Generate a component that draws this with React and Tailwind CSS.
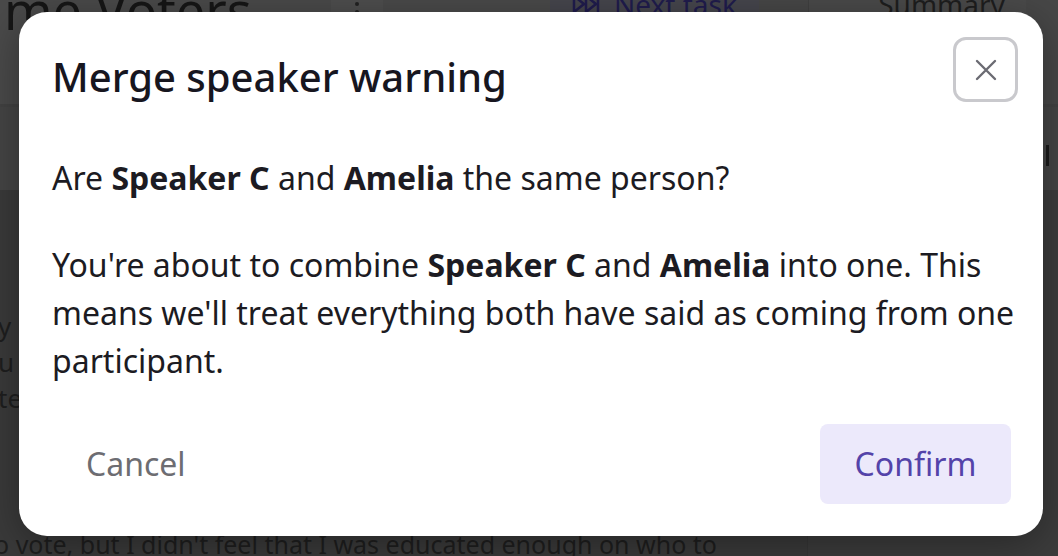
import React from "react";

function Background() {
  return (
    <div className="flex h-full w-full flex-col bg-[#3b3b3b] text-[#1a1a1c]">
      {/* header */}
      <div className="flex h-[104px] bg-[#4a4a4a]">
        <div className="w-[331px] overflow-hidden">
          <div className="-mt-[20px] ml-[4px] whitespace-nowrap text-[52px] leading-[60px] text-[#161616]">
            me Voters
          </div>
        </div>
        <div className="flex w-[52px] justify-center bg-[#4e4e4e] pt-[2px]">
          <div className="flex flex-col gap-[4px]">
            <span className="h-[4px] w-[4px] rounded-full bg-[#222]" />
            <span className="h-[4px] w-[4px] rounded-full bg-[#222]" />
          </div>
        </div>
        <div className="w-[167px]" />
        <div className="flex w-[209px] items-start justify-center gap-[12px] bg-[#46464d] text-[#201c4d]">
          <svg className="-mt-[6px]" width="30" height="20" viewBox="0 0 30 20" fill="none">
            <path d="M2 2L12 10L2 18Z M14 2L24 10L14 18Z M26 2V18" stroke="#201c4d" strokeWidth="2.5" strokeLinejoin="round" />
          </svg>
          <span className="-mt-[16px] whitespace-nowrap text-[28px] leading-[40px]">Next task</span>
        </div>
        <div className="w-[49px] bg-[#474747]" />
        <div className="w-[49px] border-l border-[#404040]" />
        <div className="flex w-[169px] justify-center">
          <span className="-mt-[16px] whitespace-nowrap text-[28px] leading-[40px] text-[#1e1e1e]">Summary</span>
        </div>
        <div className="flex-1 bg-[#474747]" />
      </div>
      <div className="h-[3px] bg-[#424242]" />
      <div className="flex h-[83px] bg-[#454545]">
        <div className="flex-1" />
        <div className="mr-[9px] mt-[38px] h-[21px] w-[3px] bg-[#1a1a1a]" />
      </div>
      <div className="flex flex-1">
        <div className="flex w-[808px] flex-col border-r border-[#363636] bg-[#3a3a3a]">
          <div className="-ml-[2px] mt-[118px] flex flex-col whitespace-nowrap text-[26px] leading-[36px] text-[#1e1e1e]">
            <span>y own vote this time around</span>
            <span>u vote in the last election</span>
            <span>te for the very first time</span>
          </div>
          <div className="flex-1" />
          <div className="-ml-[6px] mb-[-6px] whitespace-nowrap text-[25px] leading-[36px] text-[#1e1e1e]">
            o vote, but I didn't feel that I was educated enough on who to
          </div>
        </div>
        <div className="flex-1 bg-[#3c3c3c]" />
      </div>
    </div>
  );
}

export default function App() {
  return (
    <div
      className="relative h-[556px] w-[1058px] overflow-hidden"
      style={{ fontFamily: '"Noto Sans", "Open Sans", sans-serif' }}
    >
      <Background />
      <div className="absolute left-[19px] top-[12px] flex h-[524px] w-[1024px] flex-col rounded-[28px] bg-white pl-[33px] pr-[25px] shadow-[0_8px_40px_rgba(0,0,0,0.35)]">
        <div className="flex items-start justify-between pt-[25px]">
          <h2 className="mt-[16px] text-[40px] font-medium leading-[48px] text-[#17161f]">
            Merge speaker warning
          </h2>
          <button className="flex h-[65px] w-[65px] items-center justify-center rounded-[13px] border-[3px] border-[#c9c9cd] bg-white">
            <svg width="22" height="22" viewBox="0 0 22 22" fill="none">
              <path d="M2 2L20 20M20 2L2 20" stroke="#6b6b73" strokeWidth="2.4" strokeLinecap="round" />
            </svg>
          </button>
        </div>
        <div className="mt-[52px] text-[32px] leading-[48px] text-[#1c1b22]">
          <p>
            Are <b className="font-bold">Speaker C</b> and <b className="font-bold">Amelia</b> the same person?
          </p>
          <p className="mt-[39px]">
            You're about to combine <b className="font-bold">Speaker C</b> and{" "}
            <b className="font-bold">Amelia</b> into one. This means we'll treat everything both have said as
            coming from one participant.
          </p>
        </div>
        <div className="mt-[39px] flex items-center justify-between pr-[7px]">
          <button className="flex h-[80px] items-center rounded-[8px] px-[34px] text-[32px] text-[#6d6d72]">
            Cancel
          </button>
          <button className="flex h-[80px] w-[191px] items-center justify-center rounded-[8px] bg-[#ece9fb] text-[32px] text-[#5443a9]">
            Confirm
          </button>
        </div>
      </div>
    </div>
  );
}
